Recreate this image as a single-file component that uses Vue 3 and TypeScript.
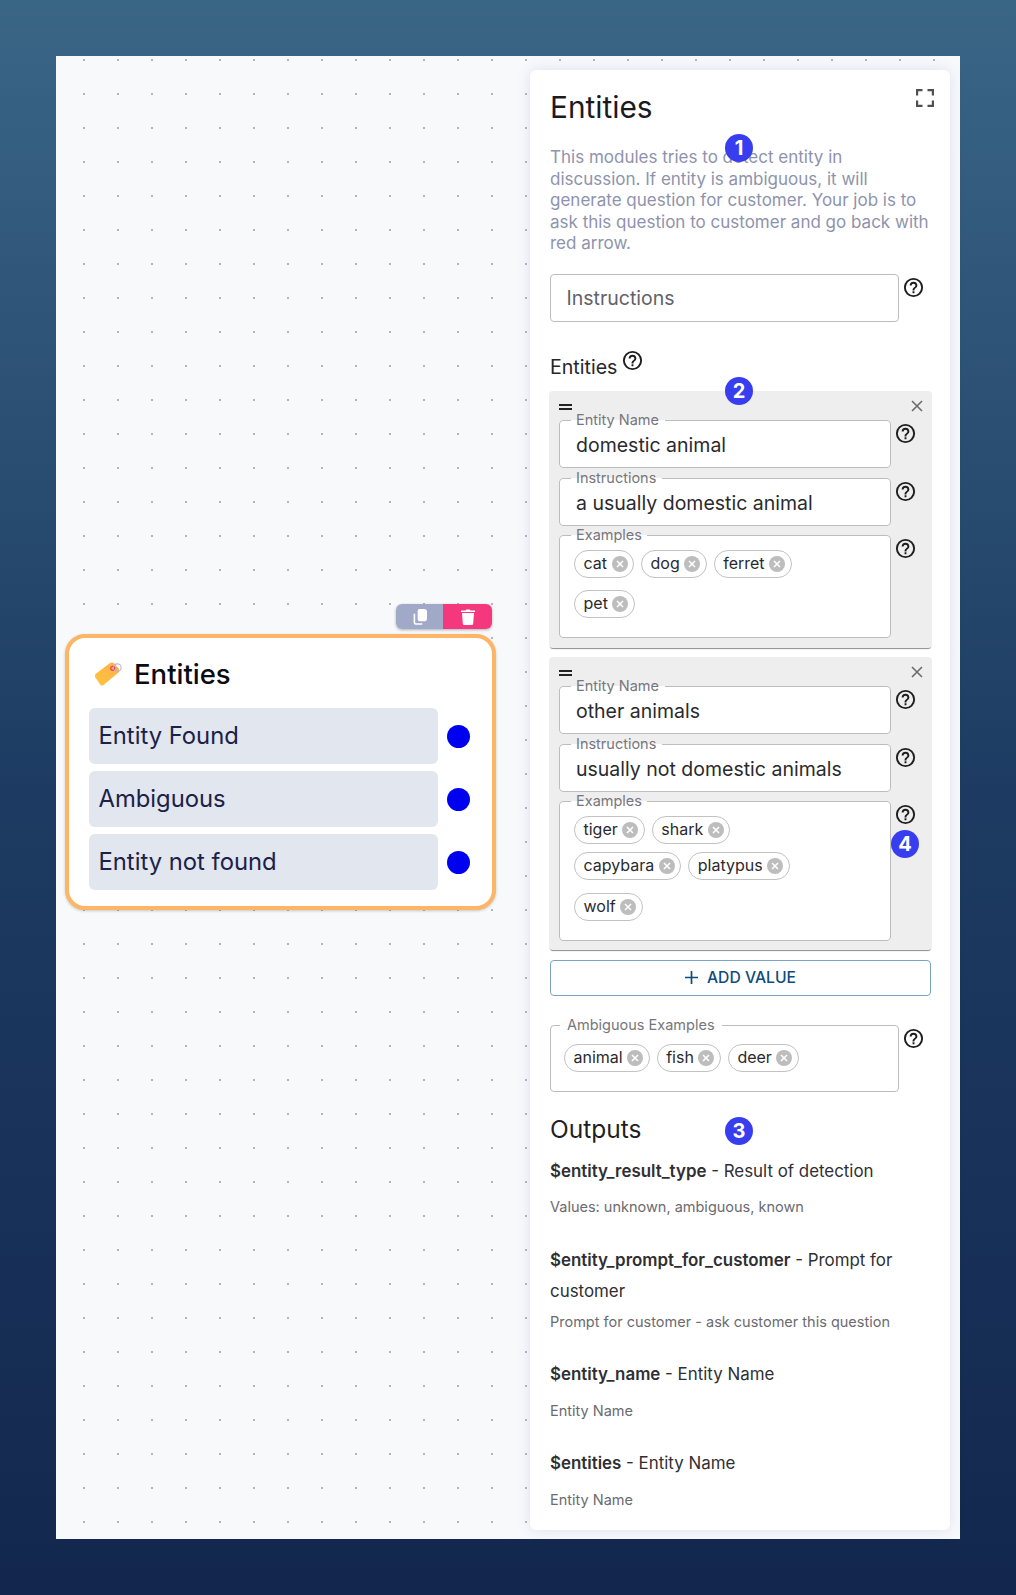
<script setup lang="ts">
interface Entity { name: string; instructions: string; rows: string[][]; tall: boolean }
const entities: Entity[] = [
  { name: 'domestic animal', instructions: 'a usually domestic animal', rows: [['cat', 'dog', 'ferret'], ['pet']], tall: false },
  { name: 'other animals', instructions: 'usually not domestic animals', rows: [['tiger', 'shark'], ['capybara', 'platypus'], ['wolf']], tall: true },
]
const outputs = [
  { key: '$entity_result_type', title: 'Result of detection', desc: 'Values: unknown, ambiguous, known' },
  { key: '$entity_prompt_for_customer', title: 'Prompt for customer', desc: 'Prompt for customer - ask customer this question' },
  { key: '$entity_name', title: 'Entity Name', desc: 'Entity Name' },
  { key: '$entities', title: 'Entity Name', desc: 'Entity Name' },
]
const ports = ['Entity Found', 'Ambiguous', 'Entity not found']
</script>

<template>
  <div class="page">
    <div class="canvas">
      <div class="node-wrap">
        <div class="toolbar">
          <span class="tool copy">
            <svg width="14" height="16" viewBox="0 0 15 17"><path d="M7 0h5a3 3 0 0 1 3 3v7a3 3 0 0 1-3 3H7a2 2 0 0 1-2-2V2a2 2 0 0 1 2-2z" fill="#fff"/><path d="M1.500 5v9.500A1.500 1.500 0 0 0 3 16h7" fill="none" stroke="#fff" stroke-width="1.700"/></svg>
          </span>
          <span class="tool del">
            <svg width="14" height="16" viewBox="0 0 14 16"><path d="M0 1.500h4.500L5.500.500h3l1 1H14V3H0zM1 4h12l-.8 10.500A1.500 1.500 0 0 1 10.700 16H3.300a1.500 1.500 0 0 1-1.500-1.500z" fill="#fff"/></svg>
          </span>
        </div>
        <div class="node">
          <div class="node-head">
            <svg class="tag" width="28" height="26" viewBox="0 0 28 26">
              <defs><linearGradient id="tagfill" x1="0" y1="1" x2="1" y2="0"><stop offset="0" stop-color="#ffc440"/><stop offset="1" stop-color="#ffb04a"/></linearGradient></defs>
              <path d="M1.500 13 16 2q2-1 4 0l5 6q1 2-.5 3.500L9.500 24q-1.500 1-3 0L1 16q-.5-2 .5-3z" fill="url(#tagfill)"/>
              <circle cx="18.700" cy="7.300" r="2" fill="#f7a0a0" stroke="#e8404e" stroke-width="1.200"/>
              <circle cx="23.300" cy="6.700" r="3.800" fill="none" stroke="#b9b2dc" stroke-width="1.100"/>
            </svg>
            <span class="node-title">Entities</span>
          </div>
          <div v-for="p in ports" :key="p" class="port-row">
            <span class="port">{{ p }}</span>
            <span class="dot"></span>
          </div>
        </div>
      </div>

      <aside class="panel">
        <svg class="expand" width="18" height="18" viewBox="0 0 18 18" fill="none" stroke="#505050" stroke-width="2.200">
          <path d="M1.100 6.500V1.100H6.500M11.500 1.100h5.400V6.500M16.900 11.500v5.400H11.500M6.500 16.900H1.100V11.500"/>
        </svg>
        <h1 class="title">Entities</h1>
        <p class="desc">This modules tries to detect entity in discussion. If entity is ambiguous, it will generate question for customer. Your job is to ask this question to customer and go back with red arrow.</p>

        <div class="line top-input">
          <div class="plain-input">Instructions</div>
          <svg class="help" viewBox="0 0 24 24"><path d="M12 2a10 10 0 1 0 0 20 10 10 0 0 0 0-20zm0 18a8 8 0 1 1 0-16 8 8 0 0 1 0 16zm-1-4h2v2h-2zm1-10a4 4 0 0 0-4 4h2a2 2 0 1 1 4 0c0 2-3 1.750-3 5h2c0-2.250 3-2.500 3-5a4 4 0 0 0-4-4z"/></svg>
        </div>

        <div class="ent-head">
          <span>Entities</span>
          <svg class="help" viewBox="0 0 24 24"><path d="M12 2a10 10 0 1 0 0 20 10 10 0 0 0 0-20zm0 18a8 8 0 1 1 0-16 8 8 0 0 1 0 16zm-1-4h2v2h-2zm1-10a4 4 0 0 0-4 4h2a2 2 0 1 1 4 0c0 2-3 1.750-3 5h2c0-2.250 3-2.500 3-5a4 4 0 0 0-4-4z"/></svg>
        </div>

        <section v-for="e in entities" :key="e.name" class="card">
          <div class="card-top">
            <span class="drag"></span>
            <svg class="close" width="12" height="12" viewBox="0 0 12 12" stroke="#6b6b6b" stroke-width="1.600"><path d="M1 1l10 10M11 1 1 11"/></svg>
          </div>
          <div class="line">
            <fieldset class="field text-field">
              <legend>Entity Name</legend>
              <div class="value">{{ e.name }}</div>
            </fieldset>
            <svg class="help" viewBox="0 0 24 24"><path d="M12 2a10 10 0 1 0 0 20 10 10 0 0 0 0-20zm0 18a8 8 0 1 1 0-16 8 8 0 0 1 0 16zm-1-4h2v2h-2zm1-10a4 4 0 0 0-4 4h2a2 2 0 1 1 4 0c0 2-3 1.750-3 5h2c0-2.250 3-2.500 3-5a4 4 0 0 0-4-4z"/></svg>
          </div>
          <div class="line tight">
            <fieldset class="field text-field">
              <legend>Instructions</legend>
              <div class="value">{{ e.instructions }}</div>
            </fieldset>
            <svg class="help" viewBox="0 0 24 24"><path d="M12 2a10 10 0 1 0 0 20 10 10 0 0 0 0-20zm0 18a8 8 0 1 1 0-16 8 8 0 0 1 0 16zm-1-4h2v2h-2zm1-10a4 4 0 0 0-4 4h2a2 2 0 1 1 4 0c0 2-3 1.750-3 5h2c0-2.250 3-2.500 3-5a4 4 0 0 0-4-4z"/></svg>
          </div>
          <div class="line">
            <fieldset class="field chips-field" :class="{ tall: e.tall }">
              <legend>Examples</legend>
              <div v-for="(r, i) in e.rows" :key="i" class="chip-row">
                <span v-for="c in r" :key="c" class="chip">{{ c }}
                  <svg class="x" viewBox="0 0 16 16"><circle cx="8" cy="8" r="8" fill="#bdbdbd"/><path d="M5 5l6 6M11 5l-6 6" stroke="#fff" stroke-width="1.600"/></svg>
                </span>
              </div>
            </fieldset>
            <svg class="help" viewBox="0 0 24 24"><path d="M12 2a10 10 0 1 0 0 20 10 10 0 0 0 0-20zm0 18a8 8 0 1 1 0-16 8 8 0 0 1 0 16zm-1-4h2v2h-2zm1-10a4 4 0 0 0-4 4h2a2 2 0 1 1 4 0c0 2-3 1.750-3 5h2c0-2.250 3-2.500 3-5a4 4 0 0 0-4-4z"/></svg>
          </div>
        </section>

        <button class="add">
          <svg class="plus" width="13" height="13" viewBox="0 0 13 13" stroke="#0f4c7e" stroke-width="1.700"><path d="M6.500 0v13M0 6.500h13"/></svg>
          ADD VALUE
        </button>

        <div class="line amb">
          <fieldset class="field amb-field">
            <legend>Ambiguous Examples</legend>
            <div class="chip-row">
              <span v-for="c in ['animal', 'fish', 'deer']" :key="c" class="chip">{{ c }}
                <svg class="x" viewBox="0 0 16 16"><circle cx="8" cy="8" r="8" fill="#bdbdbd"/><path d="M5 5l6 6M11 5l-6 6" stroke="#fff" stroke-width="1.600"/></svg>
              </span>
            </div>
          </fieldset>
          <svg class="help" viewBox="0 0 24 24"><path d="M12 2a10 10 0 1 0 0 20 10 10 0 0 0 0-20zm0 18a8 8 0 1 1 0-16 8 8 0 0 1 0 16zm-1-4h2v2h-2zm1-10a4 4 0 0 0-4 4h2a2 2 0 1 1 4 0c0 2-3 1.750-3 5h2c0-2.250 3-2.500 3-5a4 4 0 0 0-4-4z"/></svg>
        </div>

        <h2 class="outputs">Outputs</h2>
        <div v-for="o in outputs" :key="o.key" class="output">
          <div class="out-main"><b>{{ o.key }}</b> - {{ o.title }}</div>
          <div class="out-desc">{{ o.desc }}</div>
        </div>
      </aside>

      <span class="badge b1">1</span>
      <span class="badge b2">2</span>
      <span class="badge b3">3</span>
      <span class="badge b4">4</span>
    </div>
  </div>
</template>

<style>
html, body { margin: 0; }
</style>

<style scoped>
.page {
  width: 1016px;
  height: 1595px;
  box-sizing: border-box;
  padding: 56px;
  background: linear-gradient(180deg, #3a6686 0%, #1d3b62 50%, #13274e 100%);
  font-family: Inter, "Noto Sans", sans-serif;
}
.canvas {
  position: relative;
  height: 1483px;
  box-sizing: border-box;
  padding: 14px 10px 9px 0;
  display: flex;
  justify-content: flex-end;
  background-color: #f8f9fb;
  background-image: radial-gradient(circle, #b4b5bc 1px, transparent 1.400px);
  background-size: 34px 34px;
  background-position: 11px -13px;
}
.node-wrap { position: absolute; left: 9px; top: 548px; width: 431px; }
.toolbar {
  display: flex;
  width: 96px;
  height: 25px;
  margin-left: 331px;
  margin-bottom: 5px;
  border-radius: 6px;
  overflow: hidden;
  box-shadow: 0 1px 3px rgba(0, 0, 0, .3);
}
.tool { display: flex; align-items: center; justify-content: center; }
.copy { width: 47px; background: #a0a9c8; }
.del { width: 49px; background: #f5387e; }
.node {
  box-sizing: border-box;
  height: 276px;
  padding: 20px 20px 0 20px;
  background: #fff;
  border: 4px solid #ffb566;
  border-radius: 20px;
  box-shadow: 0 1px 3px rgba(0, 0, 0, .2);
}
.node-head { display: flex; align-items: center; height: 32px; margin: 0 0 18px 5px; gap: 12px; }
.tag { flex: none; }
.node-title { font-size: 27.500px; font-weight: 500; color: #0b0b12; }
.port-row { display: flex; align-items: center; gap: 9px; height: 56px; margin-bottom: 7px; }
.port {
  width: 349px;
  height: 56px;
  box-sizing: border-box;
  padding-left: 9.500px;
  line-height: 55px;
  background: #e1e6ef;
  border-radius: 6px;
  font-size: 23.800px;
  color: #1c2148;
}
.dot { width: 23px; height: 23px; border-radius: 50%; background: #0000f0; }

.panel {
  position: relative;
  width: 420px;
  height: 1460px;
  box-sizing: border-box;
  padding: 20px 18px 0 20px;
  background: #fff;
  border-radius: 6px;
  box-shadow: 0 0 14px rgba(90, 100, 190, .16);
  color: #26262b;
}
.expand { position: absolute; right: 16px; top: 19px; }
.title { margin: 0; font-size: 29.800px; line-height: 35px; font-weight: 400; color: #1a1a1e; }
.desc { margin: 22px 0 19px; font-size: 17px; line-height: 21.600px; color: #8e93ad; }
.line { display: flex; align-items: flex-start; }
.help { flex: none; width: 23px; height: 23px; margin-left: 3px; fill: #1e1e1e; }
.top-input .help { margin-left: 3px; margin-top: 2px; }
.plain-input {
  box-sizing: border-box;
  width: 349px;
  height: 48px;
  padding-left: 15.500px;
  line-height: 46px;
  border: 1px solid #bdbdbd;
  border-radius: 4px;
  font-size: 19.500px;
  color: #626268;
}
.ent-head { display: flex; align-items: flex-start; margin-top: 30px; height: 39px; font-size: 19.600px; line-height: 30px; color: #26262b; }
.ent-head .help { margin-left: 4px; margin-top: -3px; }

.card {
  width: 383px;
  margin-left: -1px;
  margin-bottom: 9px;
  box-sizing: border-box;
  padding: 0 10px 7px;
  background: #eee;
  border-radius: 4px;
  box-shadow: 0 2px 1px -1px rgba(0, 0, 0, .45);
}
.card:nth-of-type(2) { padding-bottom: 6px; margin-bottom: 10px; }
.card-top { height: 22px; display: flex; justify-content: space-between; padding-top: 8px; box-sizing: border-box; }
.drag { width: 13px; height: 6px; margin-top: 5px; border-top: 2px solid #222; border-bottom: 2px solid #222; box-sizing: border-box; }
.close { margin: 1px -1px 0 0; }
.card .line { margin-bottom: 3px; }
.card .line.tight { margin-bottom: 2px; }
.card .help { margin-left: 3px; margin-top: 9px; }
.field {
  box-sizing: border-box;
  margin: 0;
  min-width: 0;
  width: 332px;
  padding: 0;
  background: #fff;
  border: 1px solid #bdbdbd;
  border-radius: 4px;
}
.field legend {
  margin-left: 10.500px;
  padding: 0 5.500px 3px;
  font-size: 14.500px;
  line-height: 13px;
  color: #76767c;
}
.text-field { height: 55px; }
.value { padding-left: 16px; font-size: 19.500px; line-height: 30px; color: #2a2a2e; margin-top: 1px; }
.chips-field { height: 110px; padding: 6px 0 0 14px; }
.chips-field legend { margin-left: -3.500px; }
.chips-field.tall { height: 147px; }
.chip-row { display: flex; gap: 7px; margin-bottom: 12px; }
.tall .chip-row { margin-bottom: 8px; }
.tall .chip-row:nth-of-type(2) { margin-bottom: 13px; }
.chip {
  display: inline-flex;
  align-items: center;
  gap: 4.500px;
  box-sizing: border-box;
  height: 28px;
  padding: 0 5.500px 1px 8.500px;
  border: 1px solid #c2c2c2;
  border-radius: 14px;
  background: #fff;
  font-size: 16px;
  color: #2a2a2e;
}
.x { width: 16px; height: 16px; flex: none; margin-bottom: -1px; }
.add {
  display: flex;
  align-items: center;
  justify-content: center;
  width: 381px;
  height: 36px;
  margin: 0 0 22px;
  padding: 0;
  background: #fff;
  border: 1px solid #7ba4c4;
  border-radius: 4px;
  font: 500 15.700px Inter, sans-serif;
  color: #0f4c7e;
}
.plus { margin-right: 9px; }
.amb-field { width: 349px; height: 74px; padding: 10px 0 0 13px; }
.amb-field legend { margin-left: -4px; padding: 0 7px 3px; }
.amb .help { margin-top: 9px; }
.outputs { margin: 22px 0 11px; font-size: 24.500px; line-height: 31px; font-weight: 400; color: #1f1f23; }
.output { margin-bottom: 22.500px; }
.out-main { min-height: 36.500px; font-size: 16.900px; line-height: 31px; color: #2f2f33; }
.out-main b { font-weight: 600; }
.out-desc { font-size: 14.500px; line-height: 30px; color: #6b6b70; }
.badge {
  position: absolute;
  width: 28px;
  height: 28px;
  border-radius: 50%;
  background: #383ef0;
  color: #fff;
  font-size: 20px;
  font-weight: 700;
  line-height: 28px;
  text-align: center;
}
.b1 { left: 669px; top: 78px; }
.b2 { left: 669px; top: 321px; }
.b3 { left: 669px; top: 1061px; }
.b4 { left: 835px; top: 774px; }
</style>
